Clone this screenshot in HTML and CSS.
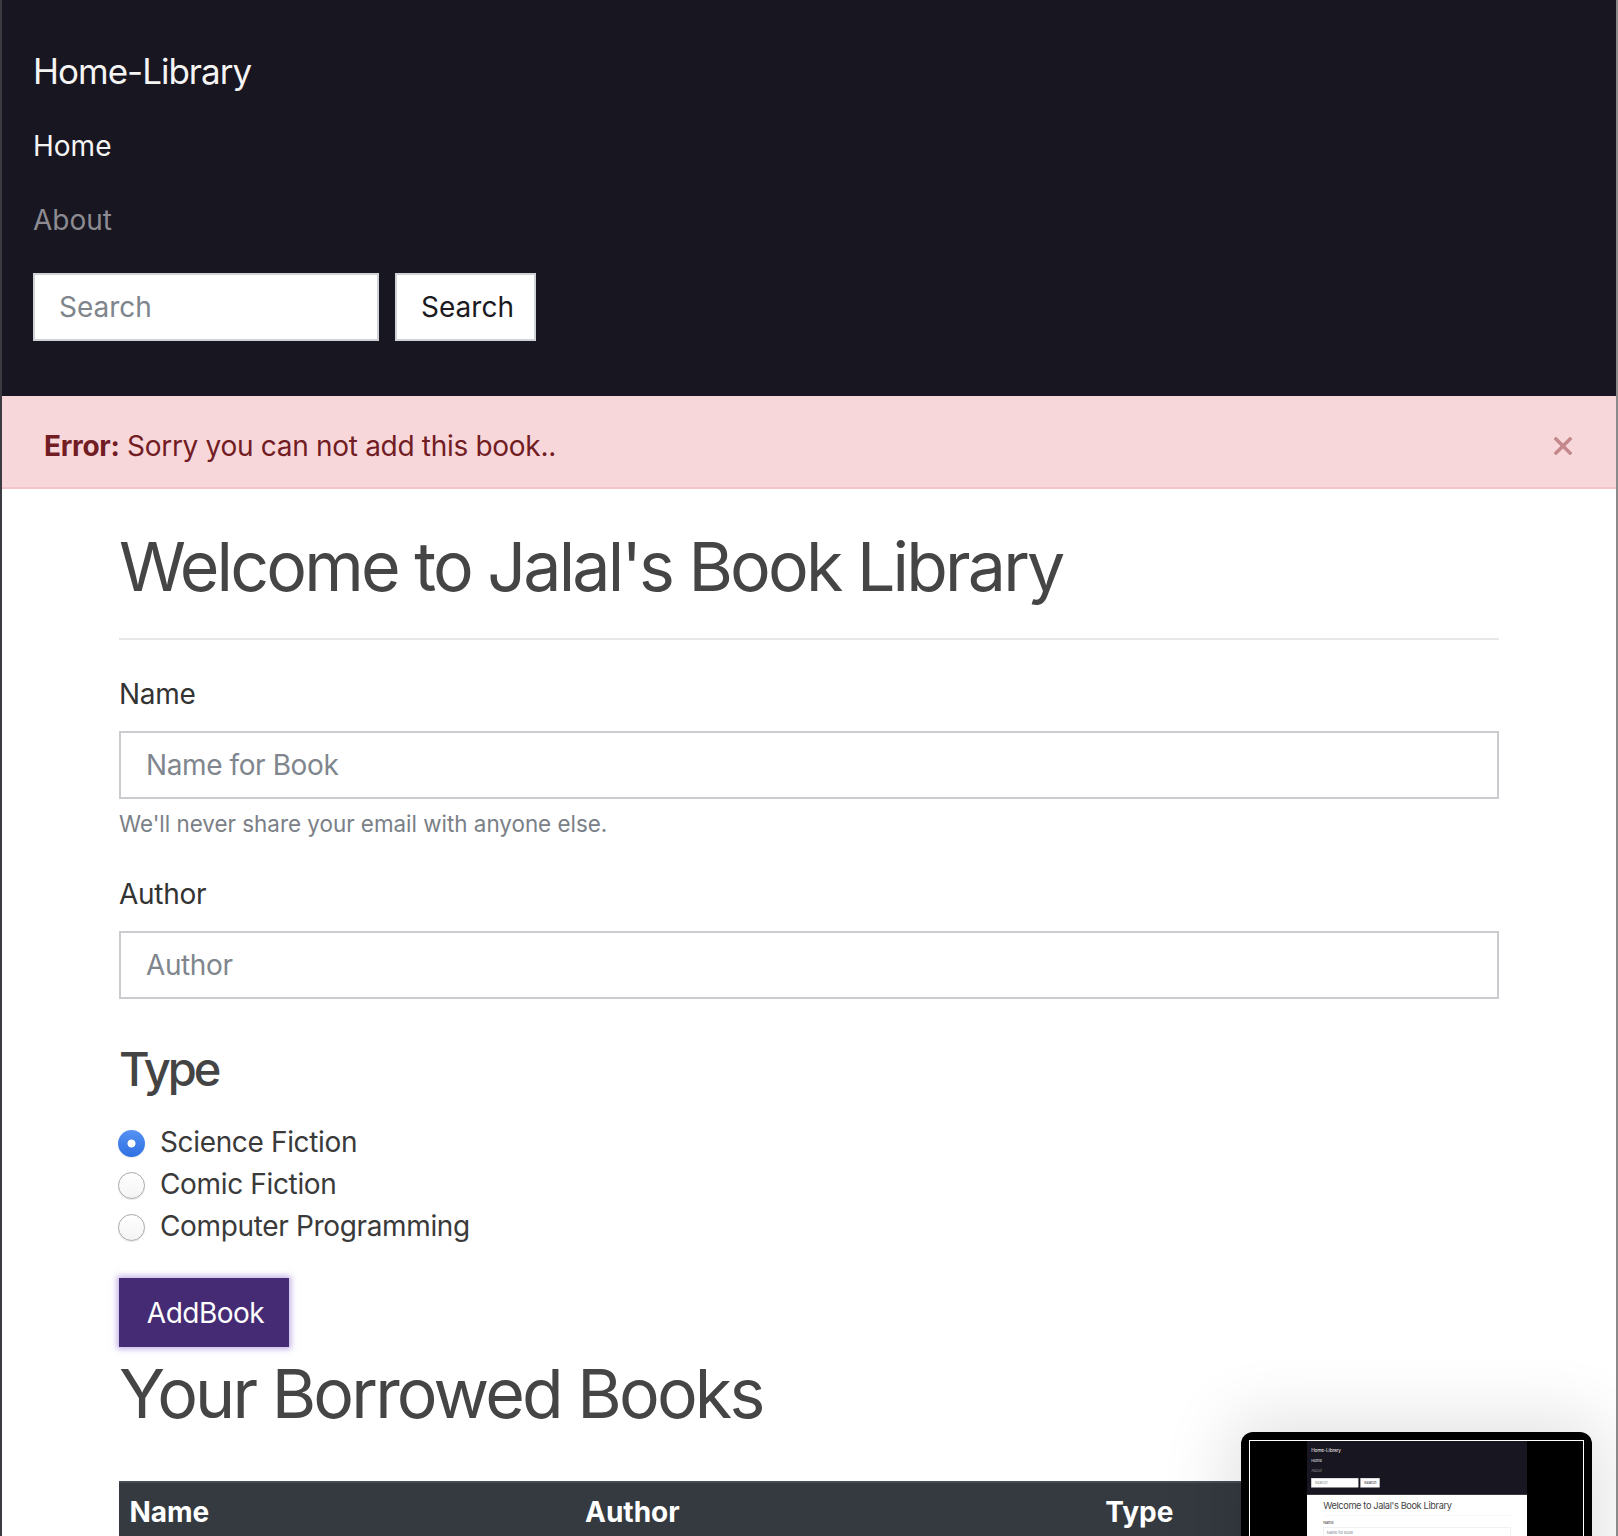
FILE: index.html
```html
<!DOCTYPE html>
<html lang="en">
<head>
<meta charset="utf-8">
<title>Home-Library</title>
<link rel="stylesheet" href="styles.css">
</head>
<body>
<nav class="navbar">
  <a class="brand" href="#">Home-Library</a>
  <ul class="nav-list">
    <li><a class="nav-link active" href="#">Home</a></li>
    <li><a class="nav-link" href="#">About</a></li>
  </ul>
  <form class="search-form">
    <input class="search-input" type="search" placeholder="Search">
    <button class="search-btn" type="button">Search</button>
  </form>
</nav>
<div class="alert">
  <span class="alert-text"><strong>Error:</strong> Sorry you can not add this book..</span>
  <button class="alert-close" type="button" aria-label="Close">
    <svg width="18" height="18" viewBox="0 0 18 18"><path d="M2 2L16 16M16 2L2 16" stroke="#c4878b" stroke-width="3.4" stroke-linecap="square" fill="none"/></svg>
  </button>
</div>
<main class="container">
  <h1 class="title">Welcome to Jalal's Book Library</h1>
  <hr class="divider">
  <form class="book-form">
    <div class="group group-first">
      <label class="label">Name</label>
      <input class="field" type="text" placeholder="Name for Book">
      <small class="help">We'll never share your email with anyone else.</small>
    </div>
    <div class="group">
      <label class="label">Author</label>
      <input class="field" type="text" placeholder="Author">
    </div>
    <h3 class="type-title">Type</h3>
    <div class="radios">
      <label class="radio-row"><input class="radio" type="radio" name="type" checked><span>Science Fiction</span></label>
      <label class="radio-row"><input class="radio" type="radio" name="type"><span>Comic Fiction</span></label>
      <label class="radio-row"><input class="radio" type="radio" name="type"><span>Computer Programming</span></label>
    </div>
    <button class="add-btn" type="button">AddBook</button>
  </form>
  <h1 class="title title-books">Your Borrowed Books</h1>
  <table class="books">
    <thead>
      <tr><th class="col-name">Name</th><th class="col-author">Author</th><th class="col-type">Type</th></tr>
    </thead>
    <tbody></tbody>
  </table>
</main>

<div class="thumb">
  <div class="thumb-frame">
    <div class="mini-page">
      <div class="mini-scale">
        <nav class="navbar">
          <span class="brand">Home-Library</span>
          <ul class="nav-list">
            <li><span class="nav-link active">Home</span></li>
            <li><span class="nav-link">About</span></li>
          </ul>
          <div class="search-form">
            <span class="search-input mini-ph">Search</span>
            <span class="search-btn mini-btn">Search</span>
          </div>
        </nav>
        <div class="container">
          <div class="title">Welcome to Jalal's Book Library</div>
          <div class="divider"></div>
          <div class="group group-first">
            <span class="label">Name</span>
            <span class="field mini-ph">Name for Book</span>
          </div>
        </div>
      </div>
    </div>
  </div>
</div>
</body>
</html>
```

FILE: styles.css
```css
* { box-sizing: border-box; }

html {
  margin: 0;
  background: #fff;
  overflow: hidden;
}

body {
  margin: 0;
  height: 1536px;
  overflow: hidden;
  position: relative;
  border-left: 2px solid #3b3a40;
  border-right: 2px solid #8a8a8a;
  font-family: Inter, "Liberation Sans", Arial, sans-serif;
  font-size: 28px;
  line-height: 42px;
  letter-spacing: -0.3px;
  color: #3a3a3a;
  background: #fff;
}

/* ---------- navbar ---------- */
.navbar {
  background: #181620;
  padding: 45px 31px 55px;
}

.brand {
  display: block;
  font-size: 35px;
  line-height: 52px;
  letter-spacing: -1px;
  color: #f4f4f4;
  text-decoration: none;
  margin-bottom: 12px;
}

.nav-list {
  list-style: none;
  margin: 0;
  padding: 0;
}

.nav-link {
  display: block;
  padding: 16px 0;
  color: #8c8b92;
  text-decoration: none;
  letter-spacing: 0;
}

.nav-link.active { color: #f4f4f4; }

.search-form {
  display: flex;
  gap: 16px;
  margin-top: 16px;
}

.search-input {
  display: block;
  width: 346px;
  height: 68px;
  border: 2px solid #cfd2d6;
  padding: 0 24px;
  font: inherit;
  letter-spacing: 0;
  color: #333;
  background: #fff;
  outline: none;
}

.search-input::placeholder { color: #7e858c; }

.search-btn {
  display: flex;
  align-items: center;
  justify-content: center;
  width: 141px;
  height: 68px;
  border: 2px solid #cfd2d6;
  background: #fff;
  color: #1b1b1f;
  font: inherit;
  letter-spacing: 0;
  padding: 0 0 0 4px;
}

/* ---------- alert ---------- */
.alert {
  height: 93px;
  background: #f8d7da;
  border-bottom: 2px solid #f3c5ca;
  display: flex;
  align-items: center;
  justify-content: space-between;
  padding: 8px 44px 0 42px;
  color: #721c24;
}

.alert-close {
  display: flex;
  width: 18px;
  height: 18px;
  padding: 0;
  border: 0;
  background: none;
}

/* ---------- main ---------- */
.container {
  width: 1380px;
  margin: 0 auto;
}

.title {
  margin: 35px 0 0;
  font-size: 68px;
  line-height: 84px;
  font-weight: 400;
  letter-spacing: -2.8px;
  color: #454545;
}

.divider {
  display: block;
  margin: 30px 0 0;
  border: 0;
  border-top: 2px solid #e7e7e7;
  height: 0;
}

.group-first { margin-top: 33px; }
.group + .group { margin-top: 32px; }

.label {
  display: block;
  margin-bottom: 16px;
  color: #333;
}

.field {
  display: block;
  width: 100%;
  height: 68px;
  border: 2px solid #cbccd0;
  padding: 0 25px;
  font: inherit;
  letter-spacing: -0.4px;
  color: #333;
  background: #fff;
  outline: none;
}

.field::placeholder { color: #7f868d; }

.help {
  display: block;
  margin-top: 8px;
  font-size: 22.4px;
  line-height: 33.6px;
  letter-spacing: 0;
  color: #7a8087;
}

.type-title {
  margin: 41px 0 0;
  font-size: 47px;
  line-height: 58.8px;
  font-weight: 500;
  letter-spacing: -3px;
  color: #444;
}

.radios { margin-top: 23px; }

.radio-row {
  display: flex;
  align-items: center;
  gap: 15px;
  color: #3a3a3a;
  letter-spacing: -0.35px;
}

.radio {
  -webkit-appearance: none;
  appearance: none;
  width: 27px;
  height: 27px;
  margin: 3px 0 0 -1px;
  border-radius: 50%;
  border: 1px solid #a9a9a9;
  background: linear-gradient(#ffffff, #f4f4f4);
  box-shadow: 0 1px 1px rgba(0, 0, 0, 0.1);
}

.radio:checked {
  border: 0;
  background:
    radial-gradient(circle, #fff 0 3.6px, transparent 4.4px),
    linear-gradient(#5592f3, #2f70e3);
}

.add-btn {
  display: block;
  margin-top: 31px;
  width: 170px;
  height: 69px;
  background: #442b74;
  color: #fff;
  border: 0;
  font: inherit;
  letter-spacing: -0.5px;
  padding: 0 0 0 3px;
  box-shadow: 0 0 6px 2px rgba(140, 110, 210, 0.55);
}

.title-books { margin-top: 4px; }

.books {
  margin-top: 46px;
  width: 100%;
  border-collapse: collapse;
  letter-spacing: 0;
}

.books th {
  background: #343a40;
  color: #fff;
  font-weight: 700;
  text-align: left;
  padding: 8px 8.4px;
  border-top: 2px solid #454d55;
}

.books th.col-name { width: 457.6px; padding-left: 10.4px; }
.col-author { width: 520.3px; }
.col-type { width: 402.1px; }

/* ---------- screenshot thumbnail overlay ---------- */
.thumb {
  position: absolute;
  left: 1239px;
  top: 1432px;
  width: 351px;
  height: 240px;
  padding: 8px;
  background: #000;
  border-radius: 12px;
  box-shadow: 0 0 70px 12px rgba(0, 0, 0, 0.12);
}

.thumb-frame {
  height: 100%;
  border: 1px solid #fff;
  background: #000;
}

.mini-page {
  width: 220px;
  height: 220px;
  margin: 0 auto;
  overflow: hidden;
  background: #fff;
}

.mini-scale {
  width: 1618px;
  transform: scale(0.136);
  transform-origin: 0 0;
}

.mini-scale .title { margin-top: 34px; }

.mini-ph {
  display: flex;
  align-items: center;
  color: #7e858c;
}

.mini-btn { color: #1b1b1f; }
```
